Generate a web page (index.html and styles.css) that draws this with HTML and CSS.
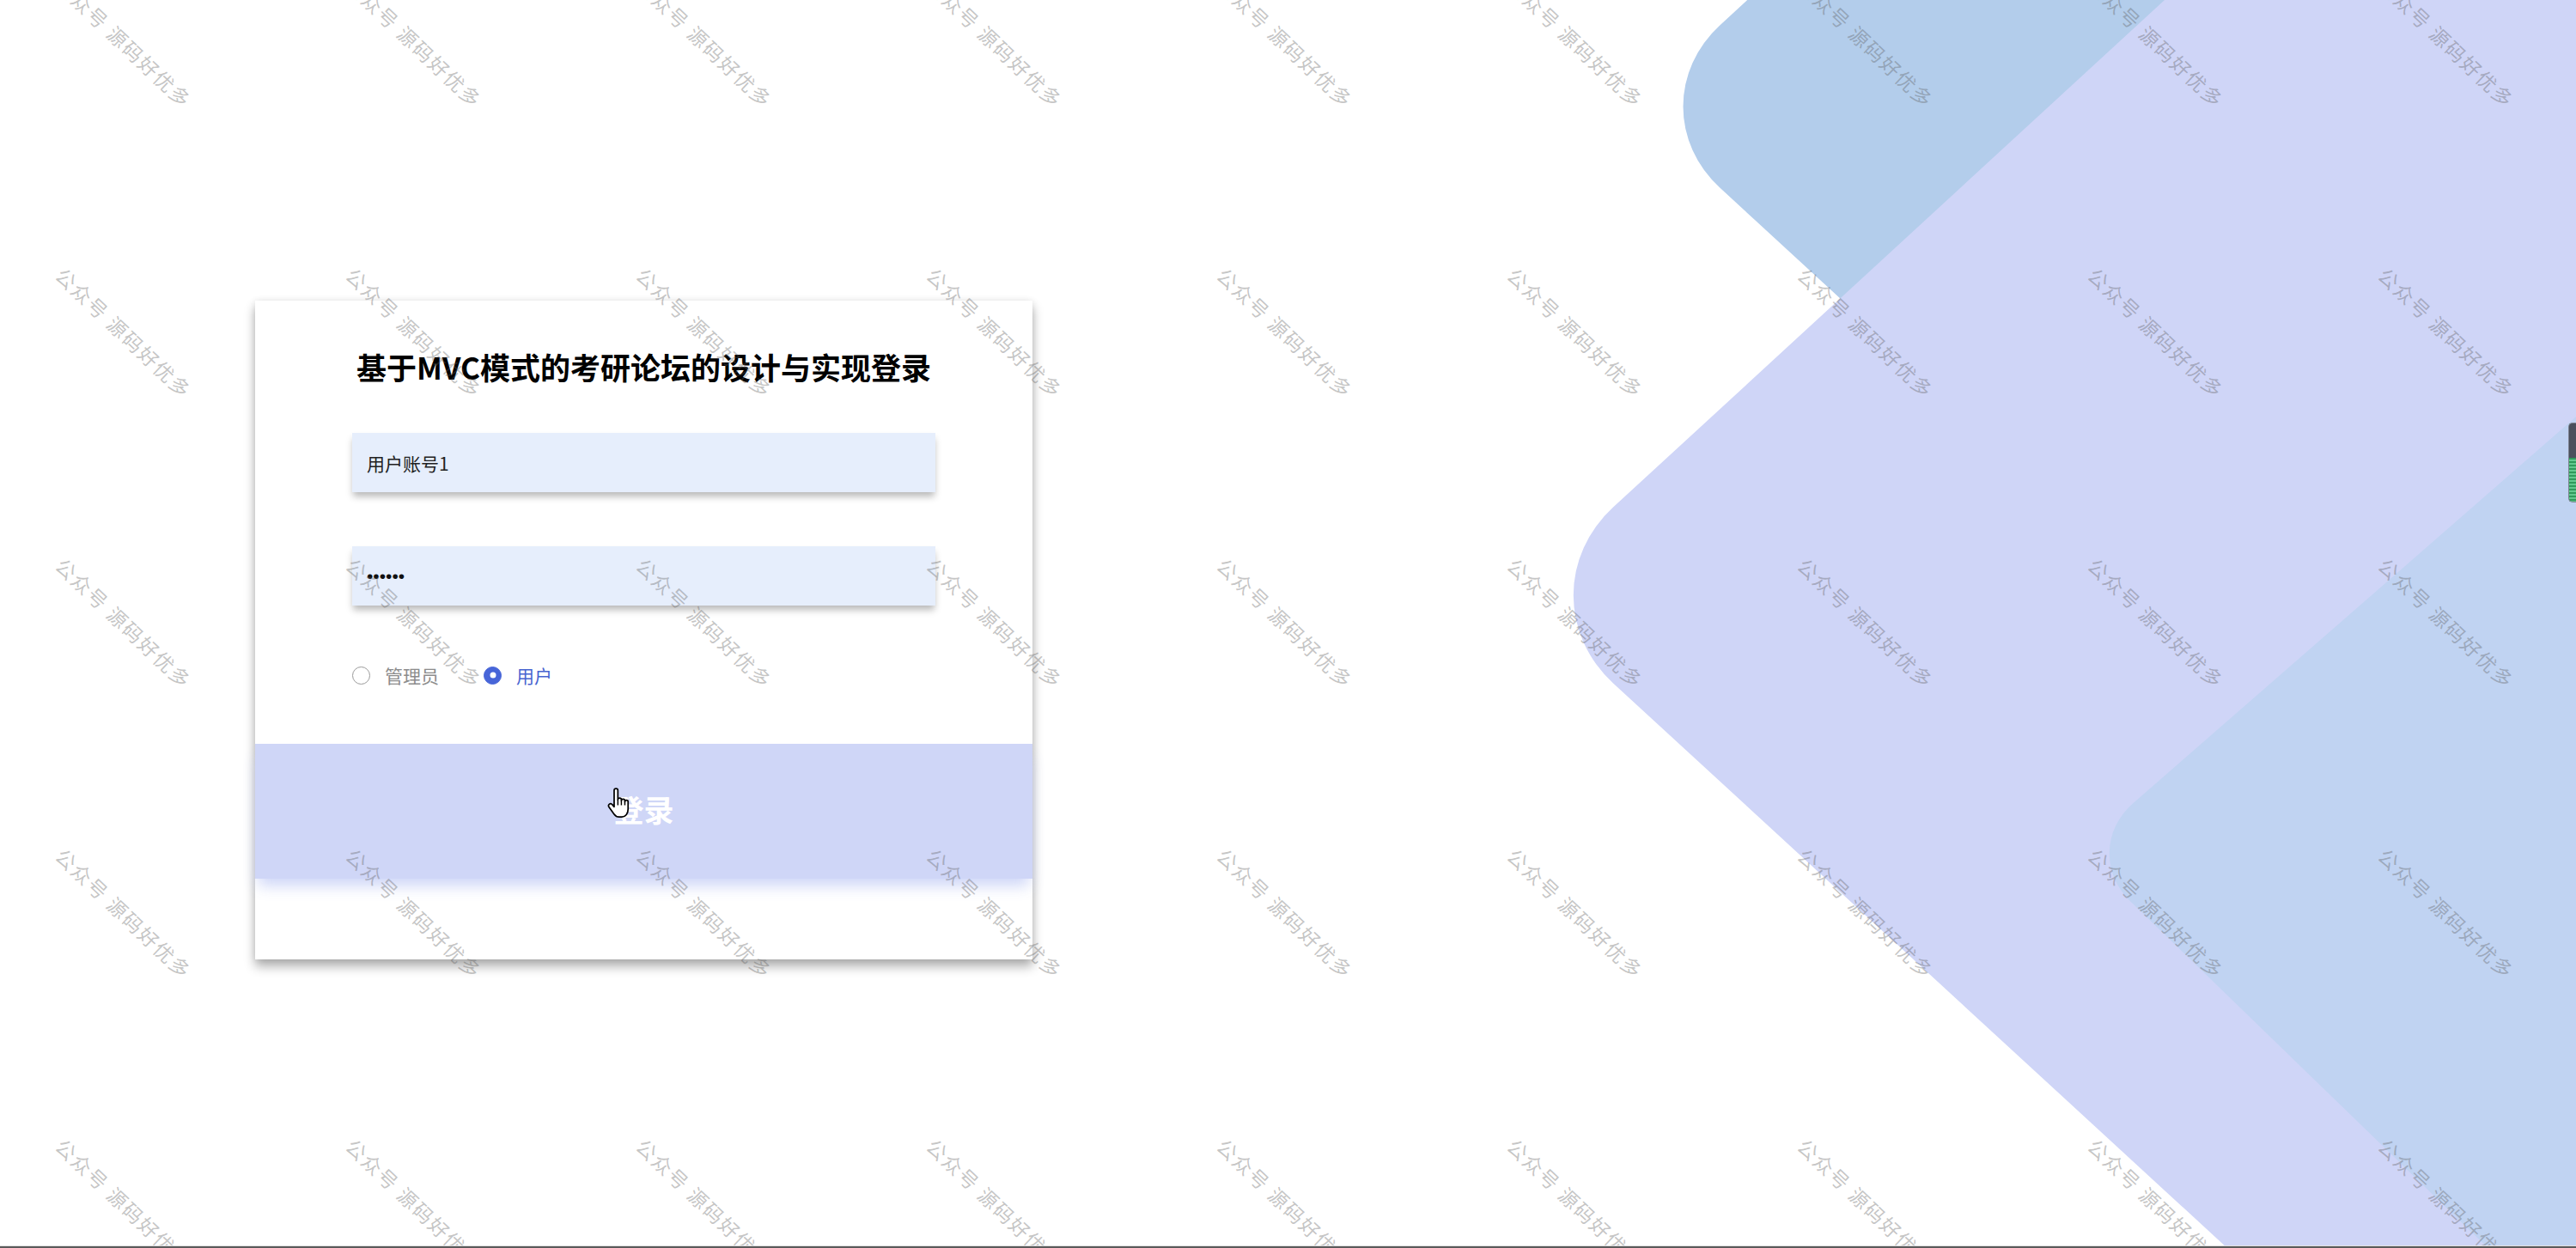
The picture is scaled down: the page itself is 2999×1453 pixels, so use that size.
FILE: index.html
```html
<!DOCTYPE html>
<html lang="zh-CN">
<head>
<meta charset="utf-8">
<title>登录</title>
<link rel="stylesheet" href="styles.css">
</head>
<body>
<div class="bg" aria-hidden="true">
  <div class="shape shape-1"></div>
  <div class="shape shape-2"></div>
  <div class="shape shape-3"></div>
</div>

<main class="page">
  <section class="login-card">
    <h1 class="login-title">基于MVC模式的考研论坛的设计与实现登录</h1>
    <div class="form-body">
      <input class="login-input" type="text" value="用户账号1">
      <input class="login-input pwd" type="password" value="123456">
      <div class="roles">
        <label class="role"><span class="radio"></span><span class="role-text">管理员</span></label>
        <label class="role checked"><span class="radio"></span><span class="role-text">用户</span></label>
      </div>
    </div>
    <button class="login-btn" type="button">登录</button>
  </section>
</main>

<div class="watermarks" aria-hidden="true">
  <div class="wm"><span>公众号 源码好优多</span></div><div class="wm"><span>公众号 源码好优多</span></div><div class="wm"><span>公众号 源码好优多</span></div><div class="wm"><span>公众号 源码好优多</span></div><div class="wm"><span>公众号 源码好优多</span></div><div class="wm"><span>公众号 源码好优多</span></div><div class="wm"><span>公众号 源码好优多</span></div><div class="wm"><span>公众号 源码好优多</span></div><div class="wm"><span>公众号 源码好优多</span></div>
  <div class="wm"><span>公众号 源码好优多</span></div><div class="wm"><span>公众号 源码好优多</span></div><div class="wm"><span>公众号 源码好优多</span></div><div class="wm"><span>公众号 源码好优多</span></div><div class="wm"><span>公众号 源码好优多</span></div><div class="wm"><span>公众号 源码好优多</span></div><div class="wm"><span>公众号 源码好优多</span></div><div class="wm"><span>公众号 源码好优多</span></div><div class="wm"><span>公众号 源码好优多</span></div>
  <div class="wm"><span>公众号 源码好优多</span></div><div class="wm"><span>公众号 源码好优多</span></div><div class="wm"><span>公众号 源码好优多</span></div><div class="wm"><span>公众号 源码好优多</span></div><div class="wm"><span>公众号 源码好优多</span></div><div class="wm"><span>公众号 源码好优多</span></div><div class="wm"><span>公众号 源码好优多</span></div><div class="wm"><span>公众号 源码好优多</span></div><div class="wm"><span>公众号 源码好优多</span></div>
  <div class="wm"><span>公众号 源码好优多</span></div><div class="wm"><span>公众号 源码好优多</span></div><div class="wm"><span>公众号 源码好优多</span></div><div class="wm"><span>公众号 源码好优多</span></div><div class="wm"><span>公众号 源码好优多</span></div><div class="wm"><span>公众号 源码好优多</span></div><div class="wm"><span>公众号 源码好优多</span></div><div class="wm"><span>公众号 源码好优多</span></div><div class="wm"><span>公众号 源码好优多</span></div>
  <div class="wm"><span>公众号 源码好优多</span></div><div class="wm"><span>公众号 源码好优多</span></div><div class="wm"><span>公众号 源码好优多</span></div><div class="wm"><span>公众号 源码好优多</span></div><div class="wm"><span>公众号 源码好优多</span></div><div class="wm"><span>公众号 源码好优多</span></div><div class="wm"><span>公众号 源码好优多</span></div><div class="wm"><span>公众号 源码好优多</span></div><div class="wm"><span>公众号 源码好优多</span></div>
</div>

<svg class="cursor" viewBox="0 0 20 26" width="29" height="38" aria-hidden="true">
  <path d="M6.2 2.2 C6.2 1.2 6.9 0.6 7.7 0.6 C8.5 0.6 9.2 1.2 9.2 2.2 V9.6 C9.2 8.8 9.8 8.3 10.6 8.3 C11.4 8.3 12 8.8 12 9.6 V10.4 C12 9.6 12.6 9.1 13.4 9.1 C14.2 9.1 14.8 9.6 14.8 10.4 V11.2 C14.8 10.5 15.4 10 16.1 10 C16.8 10 17.4 10.5 17.4 11.2 V17.2 C17.4 20.6 15.4 23.4 12.4 23.4 H10.2 C8.4 23.4 7.2 22.6 6.2 21.2 L2 15.4 C1.4 14.6 1.6 13.6 2.4 13.1 C3.2 12.6 4.2 12.9 4.8 13.6 L6.2 15.3 Z" fill="#fff" stroke="#000" stroke-width="1.2" stroke-linejoin="round"/>
  <path d="M9.2 9.6 V14 M12 10.4 V14 M14.8 11.2 V14" stroke="#000" stroke-width="1" fill="none"/>
</svg>

<div class="side-widget" aria-hidden="true"></div>
<div class="bottom-bar" aria-hidden="true"></div>
</body>
</html>
```

FILE: styles.css
```css
html, body {
  margin: 0;
  padding: 0;
  width: 100%;
  height: 100%;
  overflow: hidden;
  background: #fff;
}

body {
  position: relative;
  font-family: "Noto Sans CJK SC", "Noto Sans", sans-serif;
}

/* decorative background shapes */
.bg {
  position: absolute;
  inset: 0;
  overflow: hidden;
  z-index: 0;
}

.shape {
  position: absolute;
  transform-origin: 50% 50%;
}

.shape-1 {
  left: 2148px;
  top: -476px;
  width: 1200px;
  height: 1200px;
  border-radius: 145px;
  background: #b3cdeb;
  transform: scaleY(0.92) rotate(45deg);
}

.shape-2 {
  left: 2181px;
  top: -307px;
  width: 2000px;
  height: 2000px;
  border-radius: 157px;
  background: #cfd5f7;
  transform: scaleY(0.92) rotate(45deg);
}

.shape-3 {
  left: 2668px;
  top: 413px;
  width: 1200px;
  height: 1200px;
  border-radius: 87px;
  background: #c0d3f2;
  transform: rotate(1.5deg) scaleY(0.92) rotate(45deg);
}

/* page */
.page {
  position: relative;
  z-index: 1;
  padding: 350px 0 0 297px;
}

.login-card {
  width: 905px;
  height: 767px;
  box-sizing: border-box;
  background: #fff;
  box-shadow: 0 8px 12px rgba(0, 0, 0, 0.32), 0 0 8px rgba(0, 0, 0, 0.08);
  padding-top: 56px;
  display: flex;
  flex-direction: column;
}

.login-title {
  margin: 0;
  font-size: 35px;
  line-height: 42px;
  font-weight: 700;
  color: #000;
  text-align: center;
}

.form-body {
  padding: 56px 113px 0;
  display: flex;
  flex-direction: column;
}

.login-input {
  display: block;
  width: 100%;
  height: 69px;
  box-sizing: border-box;
  border: none;
  border-radius: 0;
  outline: none;
  margin: 0;
  background: #e6eefc;
  box-shadow: 0 6px 8px -1px rgba(0, 0, 0, 0.28);
  padding: 0 17px;
  font-family: "Noto Sans CJK SC", "Noto Sans", sans-serif;
  font-size: 21px;
  color: #222;
}

.login-input + .login-input {
  margin-top: 63px;
}

.pwd {
  font-family: "Liberation Sans", sans-serif;
  color: #111;
}

.roles {
  display: flex;
  align-items: center;
  height: 22px;
  margin-top: 70px;
}

.role {
  display: flex;
  align-items: center;
  margin-right: 52px;
  font-size: 21px;
  line-height: 22px;
  color: #8c8c8c;
}

.radio {
  position: relative;
  width: 21px;
  height: 21px;
  box-sizing: border-box;
  border: 1.5px solid #9a9a9a;
  border-radius: 50%;
  margin-right: 17px;
  background: #fff;
}

.role.checked {
  color: #4763d0;
}

.role.checked .radio {
  border-color: #4765d8;
  background: #4765d8;
}

.role.checked .radio::after {
  content: "";
  position: absolute;
  left: 50%;
  top: 50%;
  width: 7px;
  height: 7px;
  border-radius: 50%;
  background: #fff;
  transform: translate(-50%, -50%);
}

.login-btn {
  display: block;
  width: 100%;
  height: 157px;
  margin-top: 69px;
  padding: 0 0 6px;
  border: none;
  border-radius: 0;
  background: #cfd6f7;
  color: #fff;
  font-family: "Noto Sans CJK SC", "Noto Sans", sans-serif;
  font-size: 35px;
  font-weight: 700;
  box-shadow: 0 12px 16px -4px rgba(200, 208, 246, 0.9);
  cursor: pointer;
}

/* watermark overlay */
.watermarks {
  position: absolute;
  left: -24px;
  top: -120px;
  display: grid;
  grid-template-columns: repeat(9, 338px);
  grid-auto-rows: 338px;
  z-index: 5;
  pointer-events: none;
}

.wm {
  display: flex;
  align-items: center;
  justify-content: center;
}

.wm span {
  display: block;
  transform: rotate(43.5deg);
  font-size: 23px;
  letter-spacing: 2px;
  color: rgba(90, 90, 90, 0.36);
  white-space: nowrap;
}

/* mouse cursor */
.cursor {
  position: absolute;
  left: 706px;
  top: 917px;
  z-index: 6;
}

/* floating widget at right edge */
.side-widget {
  position: absolute;
  right: 0;
  top: 492px;
  width: 9px;
  height: 93px;
  box-sizing: border-box;
  border: 1px solid #7c8290;
  border-right: none;
  border-radius: 5px 0 0 5px;
  background:
    linear-gradient(#4a505c 0 40px, transparent 40px),
    repeating-linear-gradient(#2f9a5c 0 2px, #62c98f 2px 4px);
  z-index: 6;
}

.bottom-bar {
  position: absolute;
  left: 0;
  right: 0;
  bottom: 0;
  height: 2px;
  border-top: 1px solid #e2e2e2;
  background: #5b5b5b;
  z-index: 6;
}
```
